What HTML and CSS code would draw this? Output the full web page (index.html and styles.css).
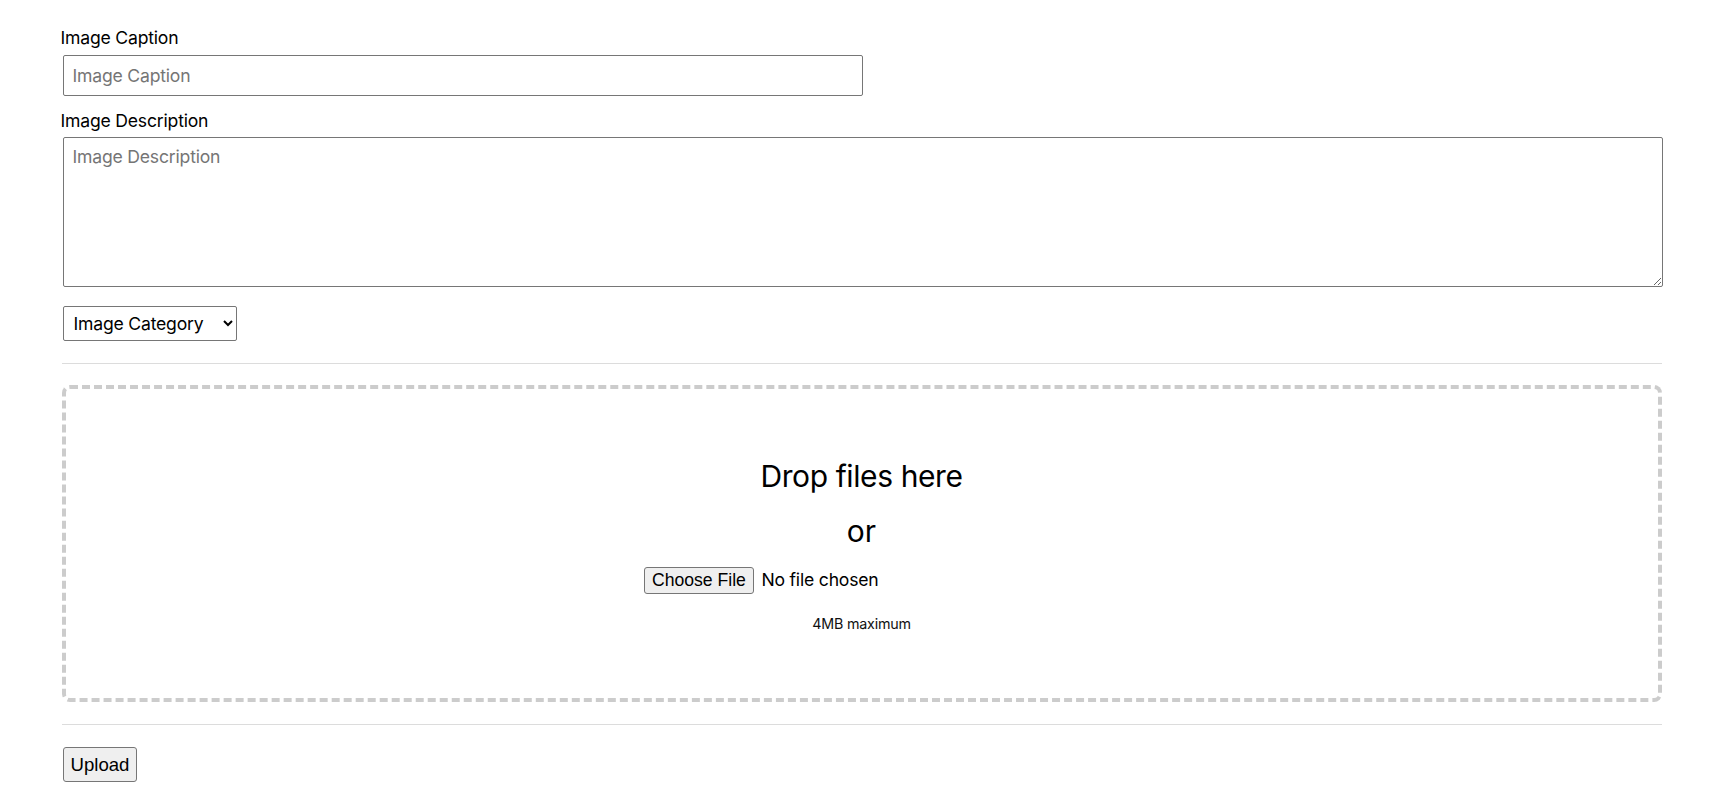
FILE: index.html
```html
<!DOCTYPE html>
<html lang="en">
<head>
    <meta charset="UTF-8">
    <meta name="viewport" content="width=device-width, initial-scale=1.0">
    <title>Upload Image</title>
    <link rel="stylesheet" href="styles.css">
</head>
<body>
    <main class="upload-page">
        <form class="upload-form" onsubmit="return false;">
            <label class="field-label" for="caption">Image Caption</label>
            <input class="text-input caption-input" type="text" id="caption" name="caption" placeholder="Image Caption">

            <label class="field-label" for="description">Image Description</label>
            <textarea class="text-input description-input" id="description" name="description" placeholder="Image Description"></textarea>

            <div class="category-row">
                <select class="category-select" id="category" name="category">
                    <option value="">Image Category</option>
                    <option value="nature">Nature</option>
                    <option value="people">People</option>
                    <option value="city">City</option>
                </select>
            </div>

            <hr class="divider divider-top">

            <div class="dropzone">
                <p class="dropzone-title">Drop files here</p>
                <p class="dropzone-or">or</p>
                <input class="file-input" type="file" id="file" name="file" accept="image/*">
                <p class="dropzone-hint">4MB maximum</p>
            </div>

            <hr class="divider divider-bottom">

            <button class="upload-button" type="submit">Upload</button>
        </form>
    </main>
</body>
</html>
```

FILE: styles.css
```css
body { margin: 0; padding: 0; font-family: Inter, "Noto Sans", sans-serif; color: #000; background-color: #fff; }

.upload-page { width: 1600px; margin: 0 auto; padding-top: 27px; }
.upload-form { display: flex; flex-direction: column; align-items: flex-start; }

.field-label { font-size: 17.6px; line-height: 21px; letter-spacing: -0.2px; margin-left: -1px; }

.text-input {
    font-family: inherit; font-size: 17.6px; letter-spacing: -0.2px; color: #000;
    border: 1px solid #767676; border-radius: 2px; padding: 8px 9px; box-sizing: border-box;
    margin-left: 1px; background-color: #fff;
}
.text-input::placeholder { color: #757575; }
.caption-input { width: 800px; height: 41px; margin-top: 7px; margin-bottom: 14px; }
.description-input { width: 1600px; height: 150px; margin-top: 6px; resize: vertical; padding-top: 8px; }

.category-row { margin-top: 19px; margin-left: 1px; }
.category-select {
    font-family: inherit; font-size: 17.6px; letter-spacing: -0.2px; color: #000;
    width: 174px; height: 35px; padding: 0 4px 0 6px;
    border: 1px solid #767676; border-radius: 2px; background-color: #fff;
}

.divider { width: 100%; border: 0; border-top: 1px solid #dcdcdc; margin: 22px 0 21px; }
.divider-bottom { margin: 22px 0 22px; }

.dropzone {
    width: 100%; box-sizing: border-box; height: 317px;
    border: 4px dashed #cccccc; border-radius: 8px;
    padding: 69px 20px 0; display: flex; flex-direction: column; align-items: center;
}
.dropzone-title { margin: 0; font-size: 30px; line-height: 36px; letter-spacing: -0.4px; }
.dropzone-or { margin: 19px 0 0; font-size: 30px; line-height: 36px; }
.dropzone-hint { margin: 21px 0 0; font-size: 14.3px; line-height: 17px; letter-spacing: -0.2px; color: #111; }

.file-input { margin-top: 18px; width: 436px; font-family: inherit; font-size: 17.6px; letter-spacing: -0.2px; color: #000; }
.file-input::file-selector-button {
    font-family: "Liberation Sans", Arial, sans-serif; font-size: 17.6px; letter-spacing: 0; color: #000;
    height: 27px; padding: 0 7.5px; margin-right: 7px;
    background-color: #efefef; border: 1px solid #767676; border-radius: 3px;
}

.upload-button {
    font-family: "Liberation Sans", Arial, sans-serif; font-size: 18.6px; color: #000;
    height: 35px; padding: 0 7px; margin-left: 1px;
    background-color: #efefef; border: 1px solid #767676; border-radius: 3px;
}
```
